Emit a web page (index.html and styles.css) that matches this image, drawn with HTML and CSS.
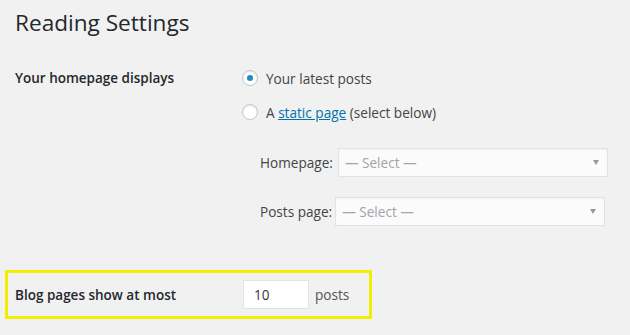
FILE: index.html
```html
<!DOCTYPE html>
<html lang="en">
<head>
    <meta charset="UTF-8">
    <title>Reading Settings</title>
    <link rel="stylesheet" href="styles.css">
</head>
<body>
    <div class="wrap">
        <h1>Reading Settings</h1>

        <div class="form-row">
            <div class="row-label">Your homepage displays</div>
            <div class="row-field">
                <label class="radio-line">
                    <span class="radio checked"></span>
                    Your latest posts
                </label>
                <label class="radio-line">
                    <span class="radio"></span>
                    A&nbsp;<a href="#">static page</a>&nbsp;(select below)
                </label>
                <div class="sub-fields">
                    <div class="sub-field">
                        <span class="sub-label">Homepage:</span>
                        <div class="select">
                            <span>&mdash; Select &mdash;</span>
                            <span class="arrow"></span>
                        </div>
                    </div>
                    <div class="sub-field">
                        <span class="sub-label">Posts page:</span>
                        <div class="select">
                            <span>&mdash; Select &mdash;</span>
                            <span class="arrow"></span>
                        </div>
                    </div>
                </div>
            </div>
        </div>

        <div class="form-row highlight">
            <div class="row-label">Blog pages show at most</div>
            <div class="row-field inline">
                <div class="number-input">10</div>
                <span class="unit">posts</span>
            </div>
        </div>
    </div>
</body>
</html>
```

FILE: styles.css
```css
* {
    margin: 0;
    padding: 0;
    box-sizing: border-box;
}

body {
    background-color: #f1f1f1;
    color: #23282d;
    font-family: "Open Sans", "Noto Sans", sans-serif;
    font-size: 13.6px;
}

.wrap {
    padding: 8px 0 0 15px;
}

h1 {
    font-size: 22.6px;
    font-weight: 400;
    line-height: 29px;
    color: #23282d;
    margin-bottom: 28px;
}

.form-row {
    display: grid;
    grid-template-columns: 227px 1fr;
}

.row-label {
    font-weight: 600;
    font-size: 13.5px;
    line-height: 20px;
    color: #23282d;
    padding-top: 3px;
}

.radio-line {
    display: flex;
    align-items: center;
    height: 26px;
    margin-bottom: 8px;
    color: #444;
}

.radio-line a {
    color: #0073aa;
}

.radio {
    width: 16px;
    height: 16px;
    border: 1px solid #c2c6ca;
    border-radius: 50%;
    background-color: #fff;
    box-shadow: inset 0 1px 2px rgba(0, 0, 0, 0.1);
    margin-right: 8px;
    display: flex;
    align-items: center;
    justify-content: center;
}

.radio.checked::after {
    content: "";
    width: 6px;
    height: 6px;
    border-radius: 50%;
    background-color: #1e8cbe;
}

.sub-fields {
    padding-left: 18px;
    padding-top: 15px;
}

.sub-field {
    display: flex;
    align-items: center;
    gap: 5px;
    margin-bottom: 20px;
}

.sub-field:last-child {
    gap: 3px;
}

.sub-label {
    color: #444;
}

.select {
    flex: 0 0 270px;
    height: 29px;
    border: 1px solid #e2e2e2;
    background-color: #fbfbfb;
    box-shadow: inset 0 1px 2px rgba(0, 0, 0, 0.04);
    display: flex;
    align-items: center;
    justify-content: space-between;
    padding: 0 8px 0 6px;
    color: #a0a5aa;
}

.arrow {
    width: 0;
    height: 0;
    border-left: 3px solid transparent;
    border-right: 3px solid transparent;
    border-top: 5px solid #999;
}

.highlight {
    margin-top: 24px;
    margin-left: -10px;
    width: 367px;
    border: 3px solid #f2ee00;
    padding: 7px 0 7px 7px;
    grid-template-columns: 228px 1fr;
    align-items: center;
}

.highlight .row-label {
    padding-top: 0;
}

.inline {
    display: flex;
    align-items: center;
    gap: 6px;
}

.number-input {
    width: 66px;
    height: 29px;
    background-color: #fff;
    border: 1px solid #e4e4e4;
    padding: 0 10px;
    line-height: 27px;
    color: #32373c;
}

.unit {
    color: #555;
}
```
